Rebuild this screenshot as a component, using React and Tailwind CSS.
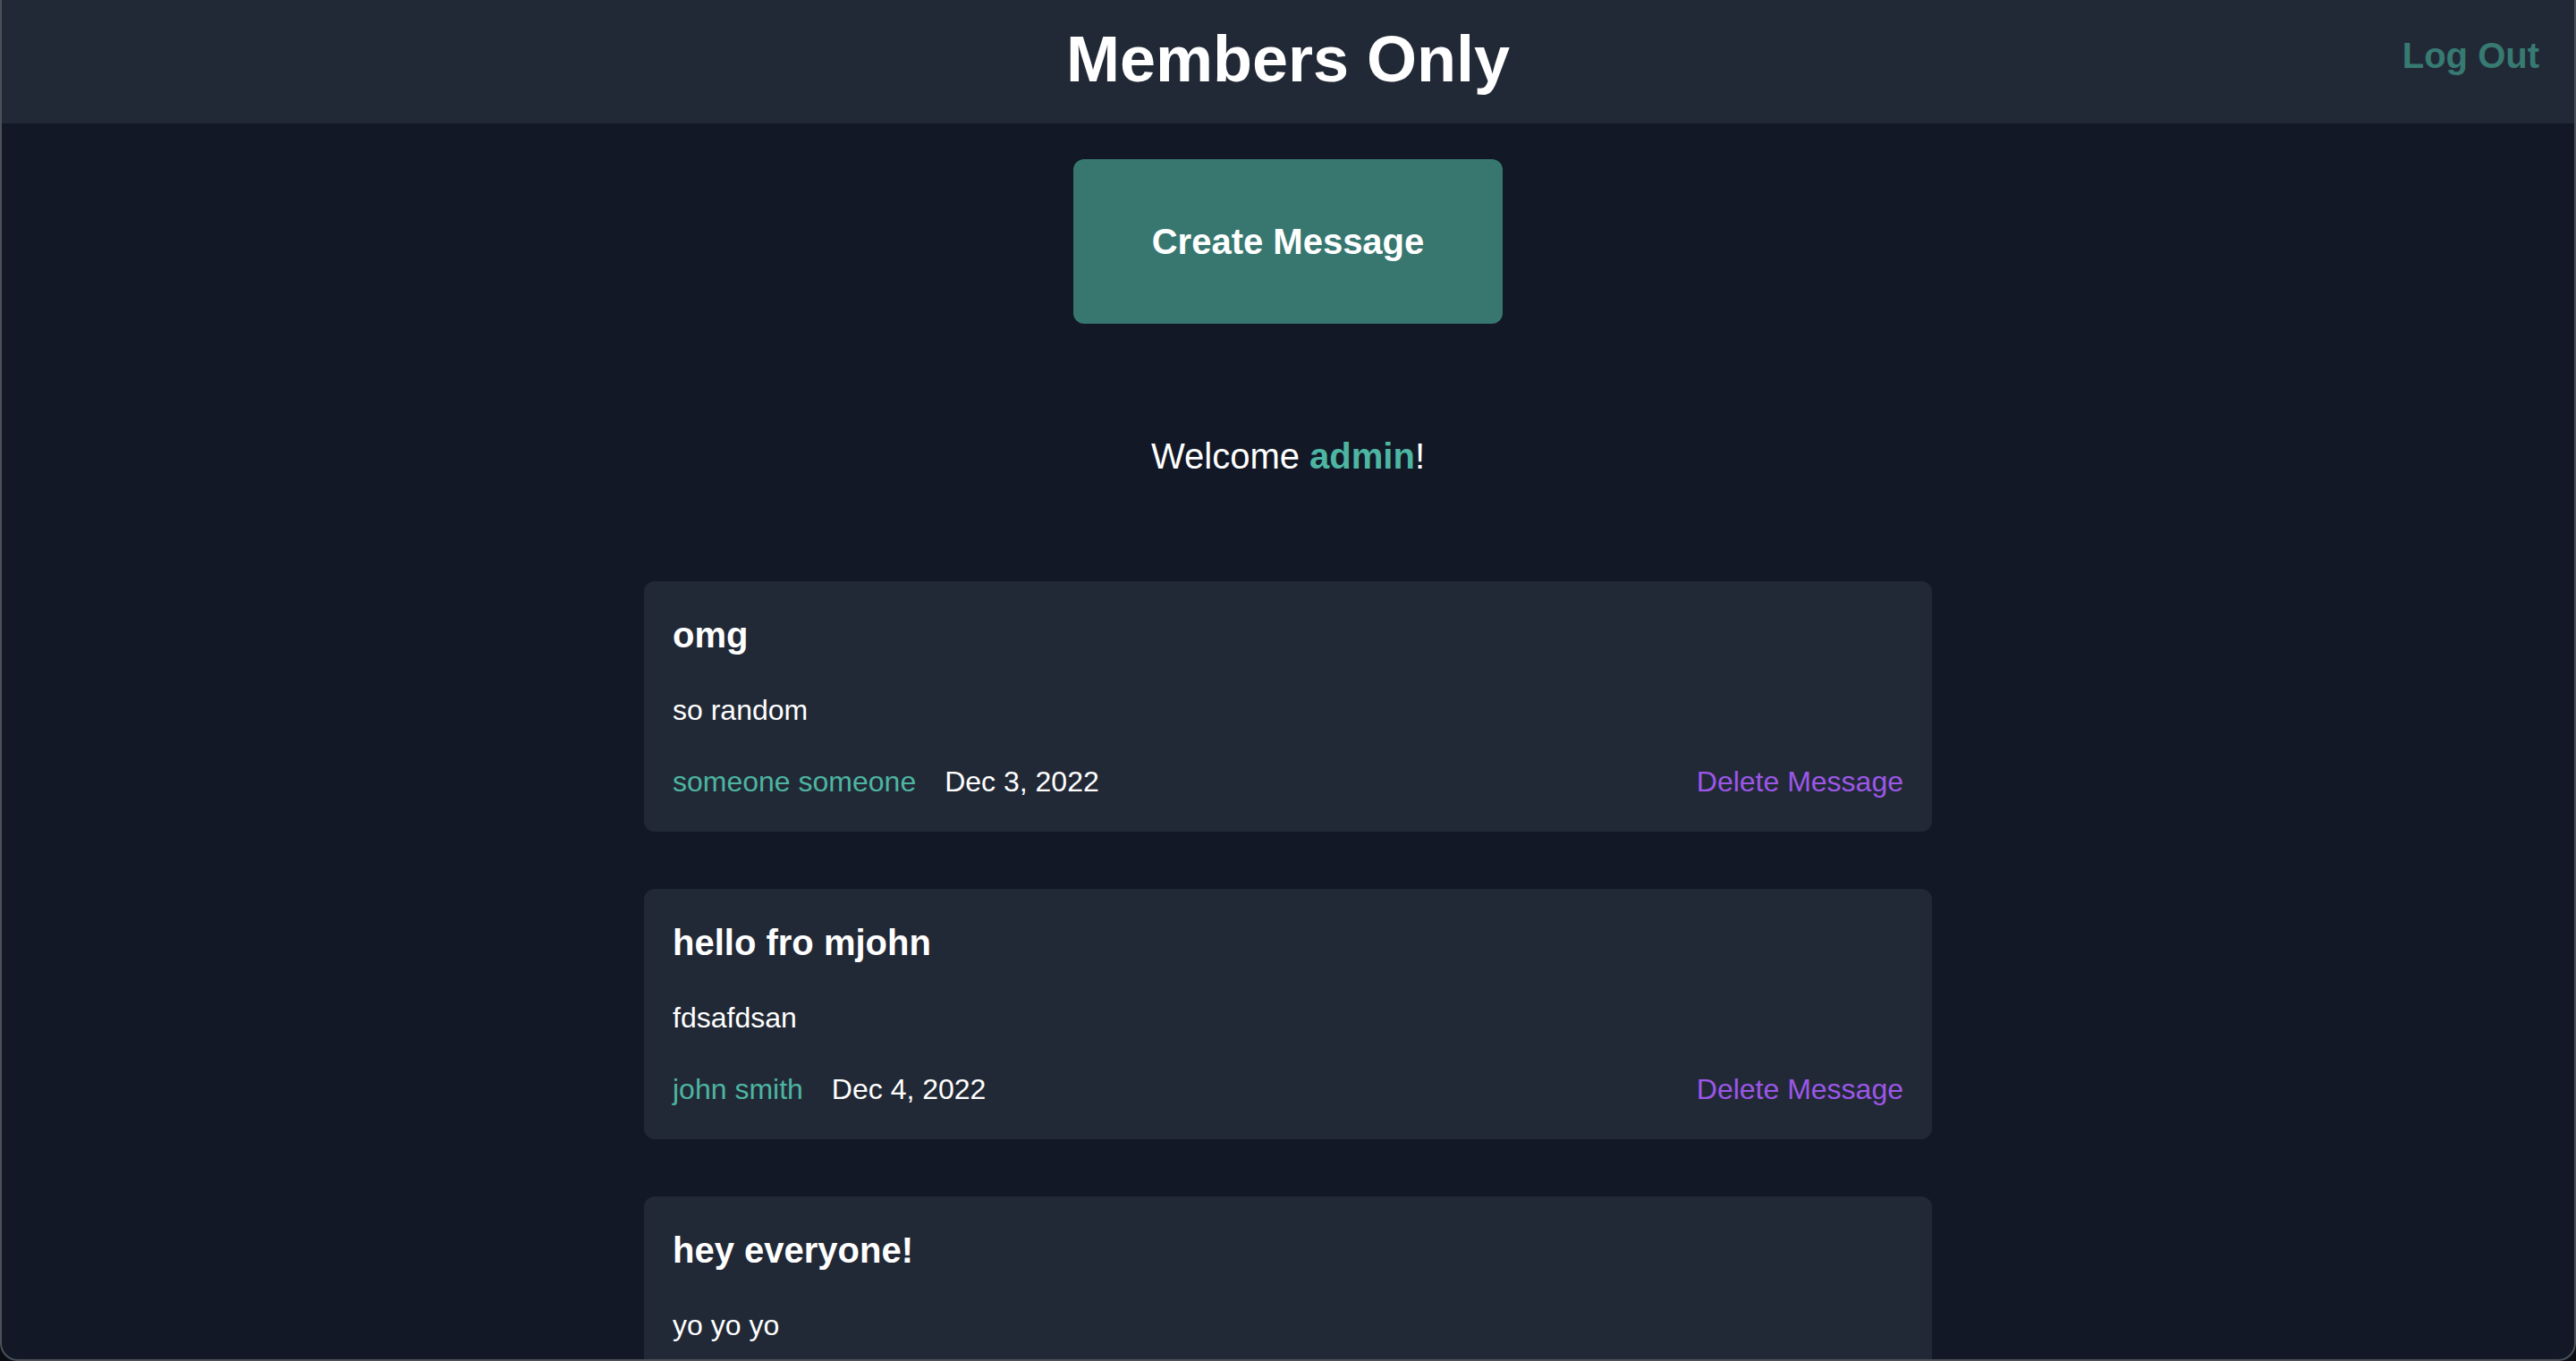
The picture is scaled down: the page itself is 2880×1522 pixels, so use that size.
import React from "react";

const messages = [
  {
    id: 1,
    title: "omg",
    body: "so random",
    author: "someone someone",
    date: "Dec 3, 2022",
  },
  {
    id: 2,
    title: "hello fro mjohn",
    body: "fdsafdsan",
    author: "john smith",
    date: "Dec 4, 2022",
  },
  {
    id: 3,
    title: "hey everyone!",
    body: "yo yo yo",
  },
];

const Header = () => {
  return (
    <header className="grid h-[138px] grid-cols-[1fr_auto_1fr] bg-[#222936]">
      <div />
      <h1 className="pt-[26px] text-[72px] font-bold leading-[80px] text-white">
        Members Only
      </h1>
      <a
        href="#"
        className="mt-[34px] self-start justify-self-end pr-[39px] text-[40px] font-bold leading-[56px] text-[#377a72]"
      >
        Log Out
      </a>
    </header>
  );
};

const MessageCard = ({ message }) => {
  return (
    <div className="rounded-[12px] bg-[#222936] p-[32px]">
      <h2 className="text-[40px] font-bold leading-[56px] text-white">
        {message.title}
      </h2>
      <p className="mt-[32px] text-[32px] leading-[48px] text-white">
        {message.body}
      </p>
      {message.author && (
        <div className="mt-[32px] flex items-center justify-between text-[32px] leading-[48px]">
          <div className="flex gap-[32px]">
            <span className="text-[#4db5a1]">{message.author}</span>
            <span className="text-white">{message.date}</span>
          </div>
          <button className="text-[#9c57e8]">Delete Message</button>
        </div>
      )}
    </div>
  );
};

const App = () => {
  return (
    <div
      className="h-[1522px] w-full overflow-hidden bg-[#0a0e14]"
      style={{ fontFamily: '"Liberation Sans", Arial, sans-serif' }}
    >
      <div className="h-full overflow-hidden rounded-b-[20px] border-x-2 border-b-2 border-[#4c5058] bg-[#121826]">
        <Header />
        <main className="flex flex-col items-center">
          <button className="mt-[40px] flex h-[184px] w-[480px] items-center justify-center rounded-[12px] bg-[#377770] text-[40px] font-bold leading-[56px] text-white">
            Create Message
          </button>
          <p className="mt-[120px] text-[40px] leading-[56px] text-white">
            Welcome <span className="font-bold text-[#4db5a1]">admin</span>!
          </p>
          <div className="mt-[112px] flex w-[1440px] flex-col gap-[64px]">
            {messages.map((m) => (
              <MessageCard key={m.id} message={m} />
            ))}
          </div>
        </main>
      </div>
    </div>
  );
};

export default App;
